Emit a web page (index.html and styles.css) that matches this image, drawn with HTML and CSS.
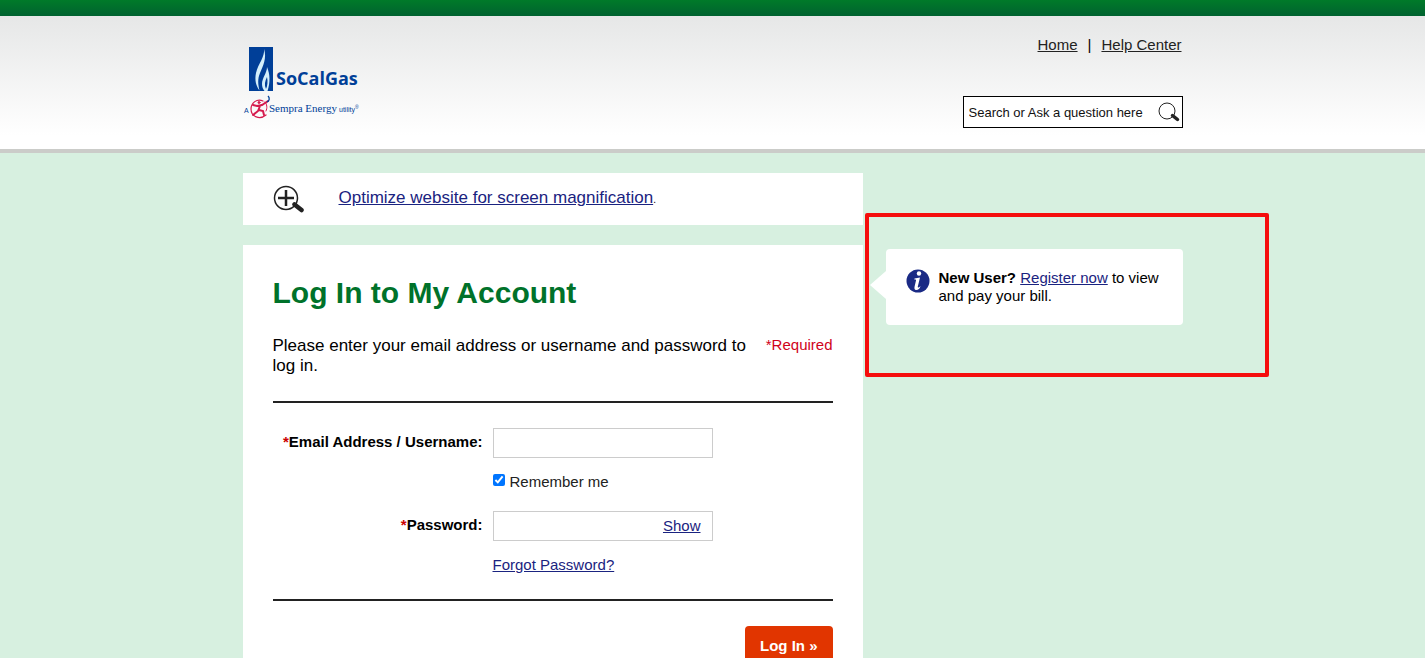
FILE: index.html
```
<!DOCTYPE html>
<html lang="en">
<head>
	<meta charset="UTF-8">
	<meta name="viewport" content="width=device-width, initial-scale=1">
	<title>Log In to My Account | SoCalGas</title>
	<link rel="stylesheet" href="styles.css">
</head>
<body>
	<div class="topbar"></div>
	<header class="header">
		<div class="wrap header-in">
			<a href="#" class="logo" aria-label="SoCalGas">
				<svg width="118" height="76" viewBox="0 0 118 76">
					<rect x="6" y="3" width="24" height="44" fill="#003f98"/>
					<path d="M21 5C22 13 15 20 13 29C11.500 36 13 42 16.500 46.500C15 40 14.500 35 17 29C20 22 24 14 21 5Z" fill="#d3effb"/>
					<path d="M24 23C24 29 19 34 19 40C19 43 20 45 21.500 47H24.500C27.500 38 27 30 24 23ZM24 33C25 37 24.500 42 23 45C21 41 22 37 24 33Z" fill="#d3effb"/>
					<text x="33" y="41" class="logo-name">SoCalGas</text>
					<text x="1" y="69" class="logo-a">A</text>
					<g fill="none" stroke="#d5194c" stroke-linecap="round">
						<path d="M20 57C14 54 8 59 8 65C8 73 17 76 23 71" stroke-width="1.200"/>
						<path d="M22 58C24 60 24.500 64 23 67" stroke-width="1"/>
						<path d="M10 61L14 62L19 61L25 57M17 62L15 67L10 71M16 66L20 67L21 71" stroke-width="2"/>
						<circle cx="16" cy="58.500" r="1" fill="#d5194c"/>
					</g>
					<path d="M25 52C27 54 26.500 57 24 58" fill="none" stroke="#003f98" stroke-width="1.300"/>
					<text x="26" y="68" class="logo-sub">Sempra Energy</text>
					<text x="96" y="68" class="logo-utility">utility</text>
					<text x="112" y="65" class="logo-reg">®</text>
				</svg>
			</a>
			<div class="tools">
				<nav class="topnav">
					<a href="#">Home</a><span>|</span><a href="#">Help Center</a>
				</nav>
				<form class="search" action="#">
					<input type="text" class="search-text" aria-label="Search" placeholder="Search or Ask a question here">
					<button type="submit" class="search-btn" aria-label="Search">
						<svg width="22" height="20" viewBox="0 0 22 20">
							<circle cx="9" cy="9" r="8" fill="none" stroke="#222" stroke-width="1"/>
							<path d="M14.500 13.500L19.500 17.500" stroke="#222" stroke-width="3.500" stroke-linecap="round"/>
						</svg>
					</button>
				</form>
			</div>
		</div>
	</header>

	<div class="wrap content">
		<main class="main">
			<div class="notice">
				<svg width="32" height="28" viewBox="0 0 32 28">
					<circle cx="13" cy="13" r="11.500" fill="none" stroke="#222" stroke-width="1.500"/>
					<path d="M13 5V21M5 13H21" stroke="#222" stroke-width="2.500"/>
					<path d="M21.500 19.500L28.500 25" stroke="#222" stroke-width="4.500" stroke-linecap="round"/>
				</svg>
				<p><a href="#">Optimize website for screen magnification</a><small>.</small></p>
			</div>

			<form class="login" action="#">
				<h1>Log In to My Account</h1>
				<div class="intro">
					<p>Please enter your email address or username and password to log in.</p>
					<span class="required">*Required</span>
				</div>
				<div class="fields">
					<label for="user" class="label"><span class="star">*</span>Email Address / Username:</label>
					<input type="text" id="user" class="text">
					<div class="remember">
						<input type="checkbox" id="remember" checked>
						<label for="remember">Remember me</label>
					</div>
					<label for="pass" class="label"><span class="star">*</span>Password:</label>
					<div class="password">
						<input type="password" id="pass">
						<a href="#">Show</a>
					</div>
					<a href="#" class="forgot">Forgot Password?</a>
				</div>
				<div class="actions">
					<button type="submit" class="login-btn">Log In »</button>
				</div>
			</form>
		</main>

		<aside class="side">
			<div class="highlight"></div>
			<div class="bubble">
				<svg width="24" height="24" viewBox="0 0 24 24">
					<circle cx="12" cy="12" r="11.500" fill="#1a2a85"/>
					<circle cx="13" cy="4.500" r="2.200" fill="#fff"/>
					<path d="M8.500 9.500L14 8.500L11.800 17.500C11.500 19 12.500 19 14.500 17C14 20 11.500 21.500 9.700 21C8.300 20.500 8.300 19 8.600 17.500L10 11.500C10.200 10.500 9.500 10.300 8.300 10.500Z" fill="#fff"/>
				</svg>
				<p><strong>New User?</strong> <a href="#">Register now</a> to view and pay your bill.</p>
			</div>
		</aside>
	</div>
</body>
</html>
```

FILE: styles.css
```
*{box-sizing:border-box;}
body,h1,p,form{margin:0;padding:0;}
body{background:#d7f0e0;color:#000;font:15px/18px "Liberation Sans",Arial,Helvetica,sans-serif;}
a{color:#1a2380;}
svg{display:block;flex:none;}
input,button{font-family:inherit;}
.wrap{max-width:940px;margin:0 auto;}

.topbar{height:16px;background:linear-gradient(#007a29,#006230);}
.header{background:linear-gradient(#e6e7e7,#fff 90%);border-bottom:4px solid #cbccc9;}
.header-in{display:flex;justify-content:space-between;padding:20px 0 21px;}
.logo{padding:8px 0;}
.logo-name{font:bold 18px "Open Sans","Liberation Sans",sans-serif;fill:#003f98;}
.logo-a{font:7px "Liberation Sans",sans-serif;fill:#003f98;}
.logo-sub{font:11px "Liberation Serif",serif;fill:#003f98;}
.logo-utility{font:7px "Liberation Sans",sans-serif;fill:#003f98;}
.logo-reg{font:5px "Liberation Sans",sans-serif;fill:#003f98;}
.tools{display:flex;flex-direction:column;align-items:flex-end;justify-content:space-between;}
.topnav{display:flex;gap:10px;padding-right:1px;}
.topnav a{color:#222;}
.search{display:flex;align-items:center;width:220px;height:32px;background:#fff;border:1px solid #000;}
.search-text{flex:1;min-width:0;height:30px;padding:0 0 0 5px;border:0;background:none;font-size:13px;}
.search-text::placeholder{color:#111;opacity:1;}
.search-btn{padding:0 2px 0 0;border:0;background:none;cursor:pointer;}

.content{display:flex;align-items:flex-start;padding-top:20px;}
.main{flex:0 1 620px;}
.notice{display:flex;align-items:center;gap:34px;min-height:52px;margin-bottom:20px;padding:0 30px;background:#fff;font-size:17px;}
.notice p{padding-bottom:1px;}
.notice small{font-size:10px;}

.login{padding:30px;background:#fff;}
.login h1{color:#00722a;font-size:30px;line-height:36px;}
.intro{display:flex;justify-content:space-between;gap:10px;padding:25px 0;border-bottom:2px solid #222;}
.intro p{flex:0 1 480px;font-size:17px;line-height:20px;}
.required{color:#d0021b;}
.star{color:#c00;}
.fields{display:grid;grid-template-columns:210px 220px;column-gap:10px;padding:25px 0;border-bottom:2px solid #222;}
.label{padding-top:5px;text-align:right;font-weight:bold;}
.text,.password{width:100%;height:30px;border:1px solid #ccc;background:#fff;}
.text{padding:0 5px;font-size:15px;}
.remember{grid-column:2;display:flex;gap:5px;padding:15px 0 20px;color:#222;}
.remember input{width:12px;height:12px;margin:1px 0 0;}
.password{display:flex;align-items:center;padding-right:11px;}
.password input{flex:1;min-width:0;height:28px;padding:0 5px;border:0;background:none;font-size:15px;}
.forgot{grid-column:2;justify-self:start;padding-top:15px;}
.actions{display:flex;justify-content:flex-end;padding-top:25px;}
.login-btn{height:38px;padding:0 15px;border:0;border-radius:4px;background:#e13500;color:#fff;font-size:15px;font-weight:bold;cursor:pointer;}

.side{position:relative;flex:1;margin:76px 0 0 23px;}
.bubble{position:relative;display:flex;gap:9px;padding:20px;min-height:76px;border-radius:4px;background:#fff;}
.bubble:before{content:"";position:absolute;left:-16px;top:22px;border:solid transparent;border-width:14px 16px 14px 0;border-right-color:#fff;}
.highlight{position:absolute;left:-21px;top:-36px;width:404px;height:164px;border:4px solid #f50d0d;border-radius:2px;}
```
